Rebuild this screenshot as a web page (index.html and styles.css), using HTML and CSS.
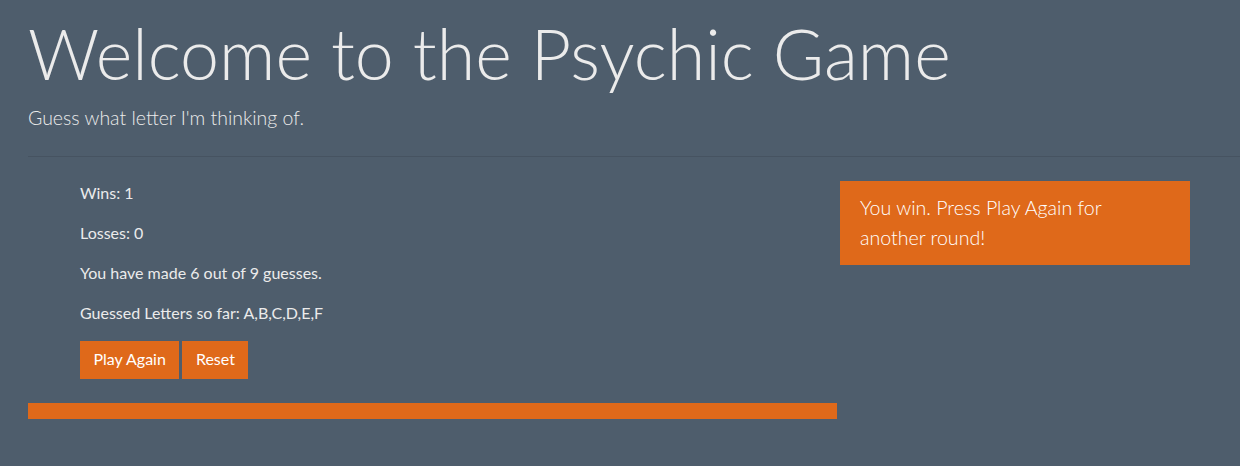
FILE: index.html
```html
<!DOCTYPE html>
<html lang="en">
<head>
<meta charset="utf-8">
<title>Psychic Game</title>
<link rel="stylesheet" href="styles.css">
</head>
<body>
<div class="page">
  <header class="intro">
    <h1 class="title">Welcome to the Psychic Game</h1>
    <p class="lead">Guess what letter I'm thinking of.</p>
    <hr class="divider">
  </header>
  <div class="game">
    <section class="stats">
      <div class="stats-inner">
        <p>Wins: 1</p>
        <p>Losses: 0</p>
        <p>You have made 6 out of 9 guesses.</p>
        <p>Guessed Letters so far: A,B,C,D,E,F</p>
        <div class="actions">
          <button class="btn">Play Again</button>
          <button class="btn">Reset</button>
        </div>
      </div>
      <div class="bar"></div>
    </section>
    <aside class="result">
      <div class="alert">You win. Press Play Again for another round!</div>
    </aside>
  </div>
</div>
</body>
</html>
```
FILE: styles.css
```css
html, body {
  margin: 0;
  padding: 0;
}
body {
  background: #4e5d6c;
  color: #ebebeb;
  font-family: Lato, "Open Sans", sans-serif;
  font-size: 16px;
  line-height: 24px;
  overflow: hidden;
}
.page {
  padding: 11px 0 0 28px;
}
.title {
  margin: 0 0 8px 0;
  font-size: 70px;
  font-weight: 300;
  line-height: 84px;
  color: #ebebeb;
}
.lead {
  margin: 0;
  font-size: 19.5px;
  font-weight: 300;
  line-height: 30px;
}
.divider {
  margin: 23px 0 24px 0;
  border: 0;
  border-top: 1px solid rgba(0, 0, 0, 0.1);
  height: 0;
}
.game {
  display: flex;
  align-items: flex-start;
}
.stats {
  width: 809px;
}
.stats-inner {
  padding-left: 52px;
}
.stats-inner p {
  margin: 0 0 16px 0;
}
.actions {
  display: flex;
  gap: 3px;
}
.btn {
  font-family: Lato, "Open Sans", sans-serif;
  font-size: 16px;
  line-height: 22px;
  padding: 7px 13.5px 9px;
  background: #df691a;
  color: #ffffff;
  border: 0;
  border-radius: 0;
  height: 38px;
}
.bar {
  margin-top: 24px;
  height: 16px;
  background: #df691a;
}
.result {
  margin-left: 3px;
  width: 350px;
}
.alert {
  background: #df691a;
  color: #ffffff;
  font-size: 19.6px;
  font-weight: 300;
  line-height: 30px;
  padding: 12px 20px;
}
```
